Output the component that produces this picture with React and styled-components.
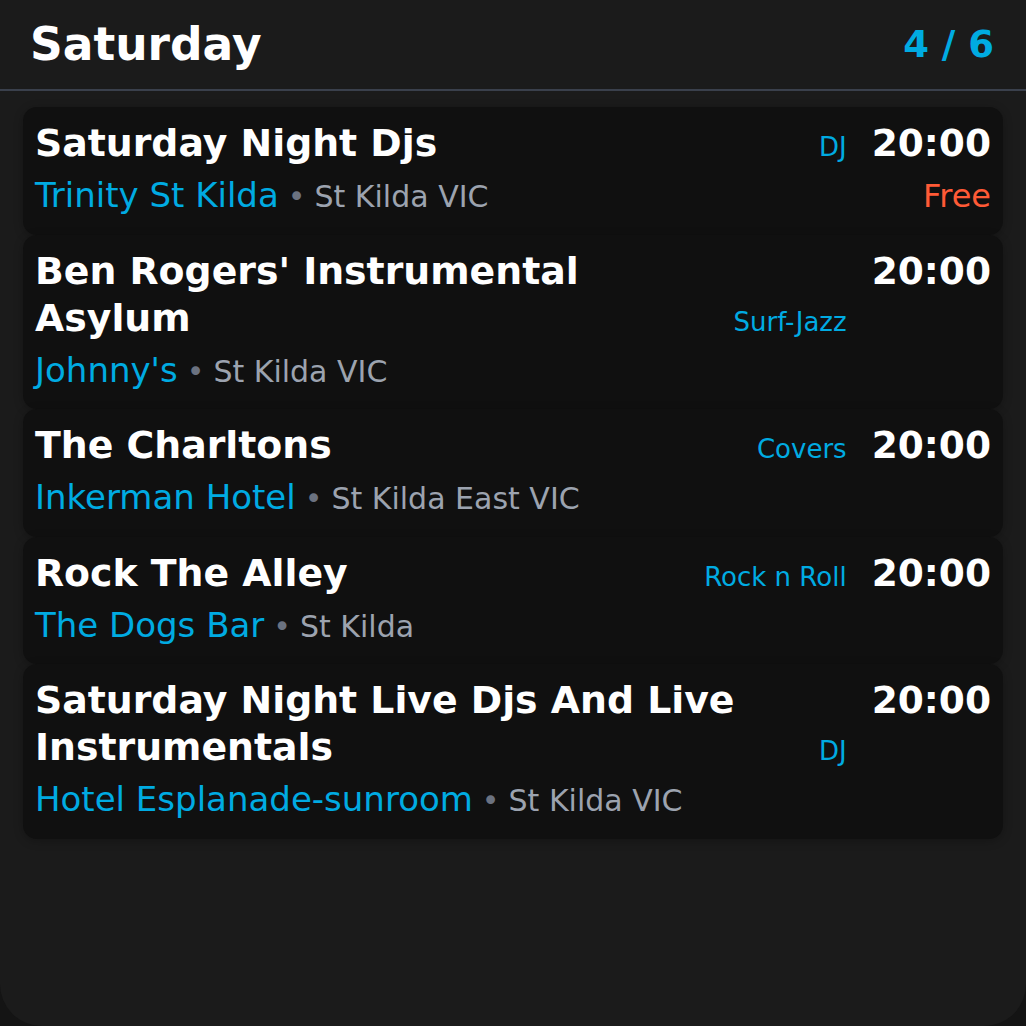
import styled, { createGlobalStyle } from "styled-components";

const GlobalStyle = createGlobalStyle`
  html, body {
    margin: 0;
    padding: 0;
    background: #141414;
  }
  * {
    box-sizing: border-box;
  }
`;

const gigs = [
  {
    title: "Saturday Night Djs",
    genre: "DJ",
    time: "20:00",
    venue: "Trinity St Kilda",
    suburb: "St Kilda VIC",
    price: "Free",
  },
  {
    title: "Ben Rogers' Instrumental Asylum",
    genre: "Surf-Jazz",
    time: "20:00",
    venue: "Johnny's",
    suburb: "St Kilda VIC",
  },
  {
    title: "The Charltons",
    genre: "Covers",
    time: "20:00",
    venue: "Inkerman Hotel",
    suburb: "St Kilda East VIC",
  },
  {
    title: "Rock The Alley",
    genre: "Rock n Roll",
    time: "20:00",
    venue: "The Dogs Bar",
    suburb: "St Kilda",
  },
  {
    title: "Saturday Night Live Djs And Live Instrumentals",
    genre: "DJ",
    time: "20:00",
    venue: "Hotel Esplanade-sunroom",
    suburb: "St Kilda VIC",
  },
];

export default function App() {
  return (
    <>
      <GlobalStyle />
      <Screen>
        <Header>
          <Day>Saturday</Day>
          <Count>4 / 6</Count>
        </Header>
        <List>
          {gigs.map((gig) => (
            <Card key={gig.title}>
              <TopRow>
                <Title>{gig.title}</Title>
                <Genre>{gig.genre}</Genre>
                <Time>{gig.time}</Time>
              </TopRow>
              <BottomRow>
                <Place>
                  <Venue>{gig.venue}</Venue>
                  <Dot>•</Dot>
                  <Suburb>{gig.suburb}</Suburb>
                </Place>
                {gig.price && <Price>{gig.price}</Price>}
              </BottomRow>
            </Card>
          ))}
        </List>
      </Screen>
    </>
  );
}

const Screen = styled.div`
  width: 100%;
  height: 100vh;
  background: #1b1b1b;
  border-radius: 0 0 42px 42px;
  font-family: "DejaVu Sans", "Liberation Sans", sans-serif;
  color: #fff;
  overflow: hidden;
`;

const Header = styled.header`
  display: flex;
  justify-content: space-between;
  align-items: center;
  padding: 18px 32px 17px 30px;
  border-bottom: 2px solid #3a404c;
`;

const Day = styled.h1`
  margin: 0;
  font-size: 45.5px;
  line-height: 54px;
  font-weight: bold;
  color: #fff;
`;

const Count = styled.span`
  font-size: 37px;
  line-height: 44px;
  font-weight: bold;
  color: #00abe2;
`;

const List = styled.section`
  display: flex;
  flex-direction: column;
  padding: 16px 23px;
`;

const Card = styled.article`
  background: #101010;
  border-radius: 14px;
  padding: 13px 12px 18.5px;
  box-shadow: 0 2px 10px rgba(0, 0, 0, 0.25);
`;

const TopRow = styled.div`
  display: flex;
`;

const Title = styled.div`
  flex: 1;
  font-size: 37.8px;
  line-height: 47px;
  font-weight: bold;
`;

const Genre = styled.div`
  align-self: flex-end;
  margin: 0 25px 0 16px;
  font-size: 26px;
  line-height: 39px;
  color: #00abe2;
  white-space: nowrap;
`;

const Time = styled.div`
  align-self: flex-start;
  font-size: 37.5px;
  line-height: 47px;
  font-weight: bold;
`;

const BottomRow = styled.div`
  display: flex;
  align-items: baseline;
  margin-top: 9px;
  font-size: 30px;
  line-height: 38px;
`;

const Place = styled.div`
  flex: 1;
`;

const Venue = styled.span`
  font-size: 34px;
  color: #00abe2;
`;

const Dot = styled.span`
  margin: 0 9px;
  color: #6b7280;
`;

const Suburb = styled.span`
  color: #9ca3af;
`;

const Price = styled.span`
  font-size: 32px;
  color: #ff5a36;
`;
